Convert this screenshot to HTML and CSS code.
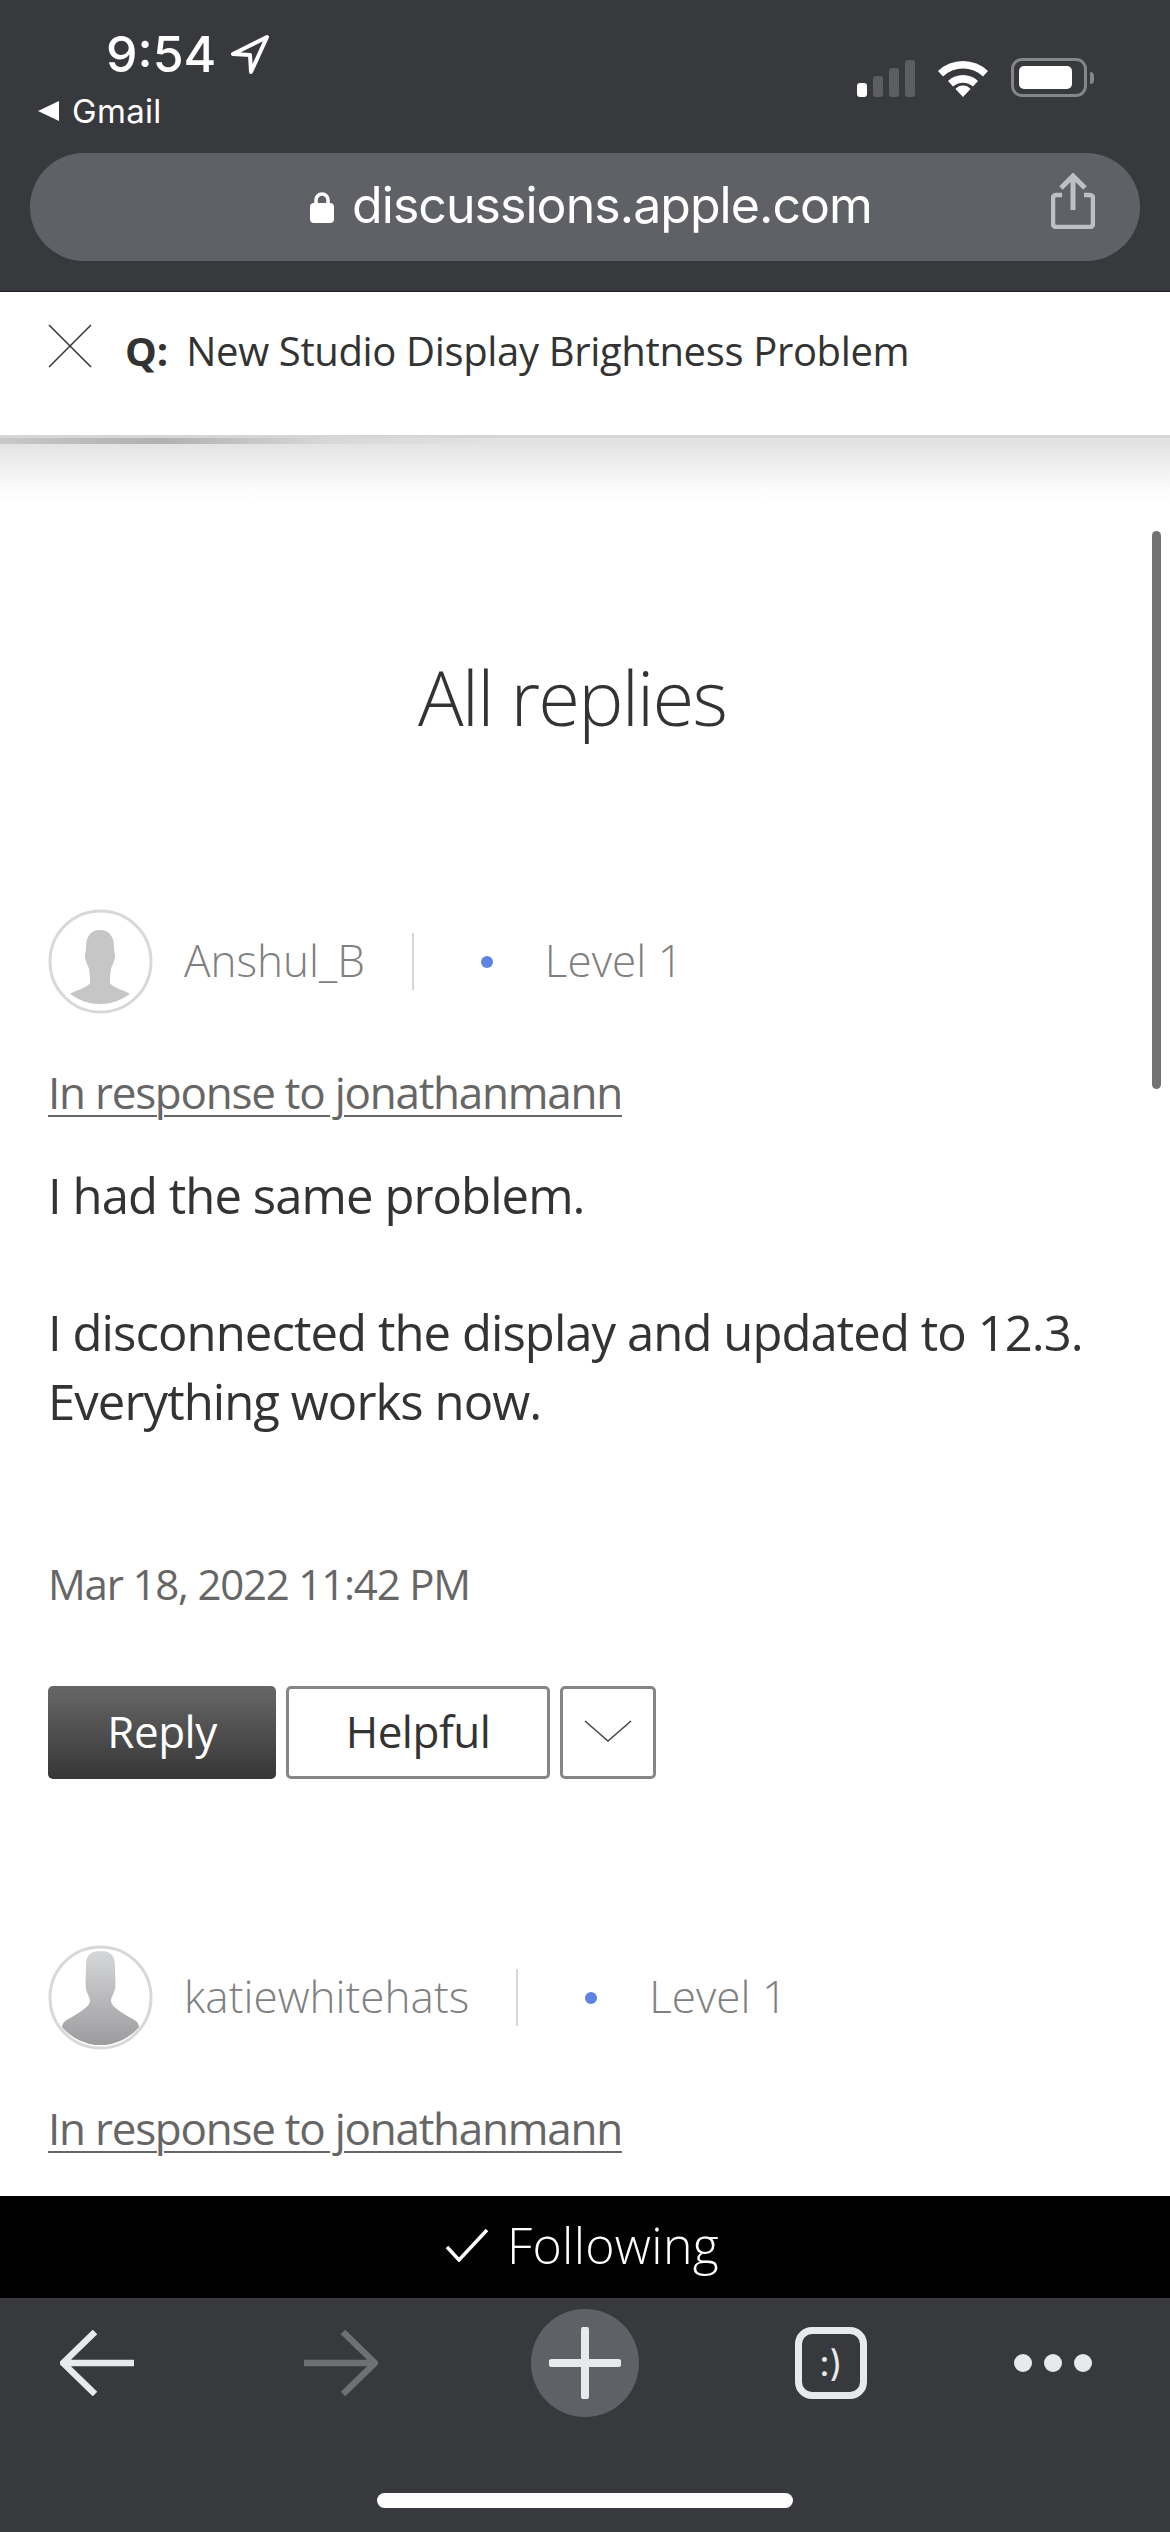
FILE: index.html
```html
<!DOCTYPE html>
<html lang="en">
<head>
    <meta charset="UTF-8">
    <title>New Studio Display Brightness Problem</title>
    <link rel="stylesheet" href="styles.css">
</head>
<body>
    <header class="browser-top">
        <div class="status">
            <div class="status-left">
                <div class="clock">
                    <span>9:54</span>
                    <svg class="location" width="40" height="40" viewBox="0 0 40 40"><path d="M37 3 3 20l17 1 1 17z" fill="none" stroke="#fff" stroke-width="4" stroke-linejoin="round"/></svg>
                </div>
                <div class="back-app"><span class="back-tri"></span>Gmail</div>
            </div>
            <div class="status-right">
                <div class="signal">
                    <span class="bar bar-on bar1"></span>
                    <span class="bar bar2"></span>
                    <span class="bar bar3"></span>
                    <span class="bar bar4"></span>
                </div>
                <svg class="wifi" width="52" height="38" viewBox="0 0 52 38"><path d="M1 12a36 36 0 0 1 50 0l-5 5.500a29 29 0 0 0-40 0z M11 22a22 22 0 0 1 30 0l-5 5.500a15 15 0 0 0-20 0z M18.500 30a10 10 0 0 1 15 0L26 38z" fill="#fff"/></svg>
                <div class="battery"><span class="battery-fill"></span></div>
                <span class="battery-cap"></span>
            </div>
        </div>
        <div class="url-bar">
            <svg class="lock" width="24" height="32" viewBox="0 0 24 32"><path d="M6 14V9a6 6 0 0 1 12 0v5" fill="none" stroke="#fff" stroke-width="3.500"/><rect x="0" y="12" width="24" height="20" rx="4" fill="#fff"/></svg>
            <span class="url">discussions.apple.com</span>
            <svg class="share" width="44" height="56" viewBox="0 0 44 56"><path d="M11 22H5a3 3 0 0 0-3 3v26a3 3 0 0 0 3 3h34a3 3 0 0 0 3-3V25a3 3 0 0 0-3-3h-6" fill="none" stroke="#bcc0c6" stroke-width="4.500"/><path d="M22 37V4M10 15 22 3l12 12" fill="none" stroke="#bcc0c6" stroke-width="5"/></svg>
        </div>
    </header>

    <div class="question-bar">
        <svg class="close" width="44" height="44" viewBox="0 0 44 44"><path d="M1 1l42 42M43 1 1 43" stroke="#333" stroke-width="1.500"/></svg>
        <span class="q-label">Q:</span>
        <span class="q-title">New Studio Display Brightness Problem</span>
    </div>
    <div class="question-rule"></div>

    <main class="content">
        <span class="scroll-thumb"></span>
        <h1 class="page-title">All replies</h1>

        <article class="reply">
            <div class="author">
                <svg class="avatar" width="105" height="105" viewBox="0 0 105 105">
                    <circle cx="52.500" cy="52.500" r="50.500" fill="#fff"/>
                    <path d="M52 21c10 0 14 7 14 18 0 3 1 5 1 8 0 5-3 9-4 13-1 5-1 9-1 14 3 5 14 7 20 11a50 50 0 0 1-60 0c6-4 17-6 20-11 0-5 0-9-1-14-1-4-4-8-4-13 0-3 1-5 1-8 0-11 4-18 14-18z" fill="#c6c6c6"/>
                    <circle cx="52.500" cy="52.500" r="50.500" fill="none" stroke="#d8d8d8" stroke-width="3"/>
                </svg>
                <span class="author-name">Anshul_B</span>
                <span class="author-sep"></span>
                <span class="level-dot"></span>
                <span class="author-level">Level 1</span>
            </div>
            <a class="in-response">In response to jonathanmann</a>
            <div class="reply-body">
                <p>I had the same problem.</p>
                <p>I disconnected the display and updated to 12.3. Everything works now.</p>
            </div>
            <div class="reply-date">Mar 18, 2022 11:42 PM</div>
            <div class="actions">
                <button class="btn btn-reply">Reply</button>
                <button class="btn btn-helpful">Helpful</button>
                <button class="btn btn-more">
                    <svg width="48" height="24" viewBox="0 0 48 24"><path d="M1 2l23 20L47 2" fill="none" stroke="#444" stroke-width="1.500"/></svg>
                </button>
            </div>
        </article>

        <article class="reply">
            <div class="author">
                <svg class="avatar" width="105" height="105" viewBox="0 0 105 105">
                    <defs>
                        <linearGradient id="bust" x1="0" y1="0" x2="0" y2="1">
                            <stop offset="0" stop-color="#d6d7d9"/>
                            <stop offset="1" stop-color="#9c9c9e"/>
                        </linearGradient>
                    </defs>
                    <circle cx="52.500" cy="52.500" r="50.500" fill="#fff"/>
                    <path d="M52 6c12 0 15 5 15 16 0 8 1 16 0 22-1 5-4 8-4 12 0 5 9 11 25 20 2 2 3 4 3 6a50 50 0 0 1-77 0c0-2 1-4 3-6 16-9 25-15 25-20 0-4-3-7-4-12-1-6 0-14 0-22 0-11 3-16 15-16z" fill="url(#bust)"/>
                    <circle cx="52.500" cy="52.500" r="50.500" fill="none" stroke="#d8d8d8" stroke-width="3"/>
                </svg>
                <span class="author-name">katiewhitehats</span>
                <span class="author-sep"></span>
                <span class="level-dot"></span>
                <span class="author-level">Level 1</span>
            </div>
            <a class="in-response">In response to jonathanmann</a>
        </article>
    </main>

    <div class="follow-bar">
        <svg width="44" height="34" viewBox="0 0 44 34"><path d="M2 19l12 13L42 2" fill="none" stroke="#fff" stroke-width="3.500"/></svg>
        <span>Following</span>
    </div>

    <footer class="browser-bottom">
        <div class="toolbar">
            <svg class="tool" width="74" height="66" viewBox="0 0 74 66"><path d="M74 33H4M35 2 3 33l32 31" fill="none" stroke="#e8e9ed" stroke-width="6.500"/></svg>
            <svg class="tool" width="74" height="66" viewBox="0 0 74 66"><path d="M0 33h70M39 2l32 31-32 31" fill="none" stroke="#6f7073" stroke-width="6.500"/></svg>
            <span class="plus-btn">
                <svg width="72" height="72" viewBox="0 0 72 72"><path d="M36 3v66M3 36h66" stroke="#e8e9ed" stroke-width="8" stroke-linecap="round"/></svg>
            </span>
            <span class="tabs-btn">:)</span>
            <span class="more-btn"><i></i><i></i><i></i></span>
        </div>
        <div class="home-bar"></div>
    </footer>
</body>
</html>
```

FILE: styles.css
```css
* {
    box-sizing: border-box;
}

html, body {
    margin: 0;
    height: 2532px;
}

body {
    display: flex;
    flex-direction: column;
    overflow: hidden;
    background: #fff;
    font-family: "Open Sans", "Noto Sans", sans-serif;
    color: #333;
}

/* top of the browser */
.browser-top {
    height: 292px;
    flex: none;
    background: #38393d;
    padding: 0 30px;
    border-bottom: 1px solid #1d1d1f;
    font-family: Inter, sans-serif;
    color: #fff;
}

.status {
    height: 153px;
    display: flex;
    justify-content: space-between;
}

.status-left {
    padding-top: 26px;
}

.clock {
    display: flex;
    align-items: center;
    gap: 14px;
    padding-left: 76px;
    font-size: 50px;
    line-height: 56px;
    font-weight: 500;
}

.back-app {
    display: flex;
    align-items: center;
    gap: 13px;
    margin-top: 9px;
    padding-left: 8px;
    font-size: 33px;
    line-height: 40px;
    letter-spacing: 0.3px;
}

.back-tri {
    border-right: 21px solid #fff;
    border-top: 10px solid transparent;
    border-bottom: 10px solid transparent;
}

.status-right {
    display: flex;
    align-items: flex-end;
    height: 97px;
    margin-right: 46px;
}

.signal {
    display: flex;
    align-items: flex-end;
    gap: 6px;
    margin-right: 22px;
}

.bar {
    width: 10px;
    border-radius: 3px;
    background: #5c5d60;
}

.bar-on { background: #fff; }
.bar1 { height: 14px; }
.bar2 { height: 21px; }
.bar3 { height: 29px; }
.bar4 { height: 37px; }

.wifi {
    margin-right: 22px;
}

.battery {
    width: 76px;
    height: 39px;
    padding: 5px;
    border: 3px solid #858688;
    border-radius: 11px;
}

.battery-fill {
    display: block;
    width: 53px;
    height: 100%;
    background: #fff;
    border-radius: 5px;
}

.battery-cap {
    width: 4px;
    height: 12px;
    margin: 0 0 13px 3px;
    background: #858688;
    border-radius: 0 6px 6px 0;
}

.url-bar {
    position: relative;
    height: 108px;
    display: flex;
    align-items: center;
    justify-content: center;
    gap: 18px;
    padding: 0 0 5px 12px;
    background: #5f6166;
    border-radius: 54px;
}

.url {
    font-size: 50px;
    letter-spacing: -0.95px;
}

.lock {
    margin-top: 4px;
}

.share {
    position: absolute;
    right: 45px;
    top: 20px;
}

/* question strip */
.question-bar {
    height: 143px;
    flex: none;
    display: flex;
    align-items: flex-start;
    padding: 31px 0 0 48px;
    font-size: 40px;
    line-height: 56px;
    color: #333;
}

.close {
    margin: 1px 33px 0 0;
}

.q-label {
    font-weight: 700;
    margin-right: 18px;
}

.q-title {
    letter-spacing: -0.35px;
}

.question-rule {
    height: 9px;
    flex: none;
    background:
        linear-gradient(#d6d6d6 3px, transparent 3px),
        linear-gradient(90deg, #c8c8c8 0, #b0b0b0 160px, #d8d8d8 330px, #e2e2e2 500px);
}

/* page content */
.content {
    position: relative;
    flex: 1;
    min-height: 0;
    overflow: hidden;
    padding: 0 48px;
    background: linear-gradient(#e3e3e3, #fbfbfb 44px, #fff 60px) no-repeat;
}

.scroll-thumb {
    position: absolute;
    right: 9px;
    top: 87px;
    width: 9px;
    height: 558px;
    border-radius: 5px;
    background: #737373;
}

.page-title {
    margin: 0;
    padding: 203px 26px 0 0;
    height: 465px;
    text-align: center;
    font-size: 76px;
    line-height: 100px;
    font-weight: 300;
    letter-spacing: -1.8px;
    color: #333;
}

.reply {
    margin-bottom: 166px;
}

.author {
    display: flex;
    align-items: center;
    height: 105px;
    font-size: 44px;
    font-weight: 300;
    letter-spacing: 0.05px;
    color: #808080;
}

.avatar {
    flex: none;
    margin-right: 31px;
}

.author-name,
.author-level {
    margin-bottom: 3px;
}

.author-sep {
    width: 2px;
    height: 57px;
    margin: 0 67px 0 47px;
    background: #d6d6d6;
}

.level-dot {
    width: 12px;
    height: 12px;
    margin-right: 52px;
    border-radius: 50%;
    background: #5f83e0;
}

.in-response {
    display: block;
    margin-top: 48px;
    font-size: 44px;
    line-height: 60px;
    letter-spacing: -1.25px;
    color: #666;
    text-decoration: underline;
    text-decoration-thickness: 2px;
    text-underline-offset: 6px;
}

.reply-body {
    margin-top: 39px;
    font-size: 49px;
    line-height: 69px;
    letter-spacing: -0.93px;
    color: #333;
}

.reply-body p {
    margin: 0 0 68px;
}

.reply-date {
    margin-top: 118px;
    font-size: 42px;
    line-height: 60px;
    letter-spacing: -1.2px;
    color: #666;
}

.actions {
    display: flex;
    gap: 10px;
    margin-top: 72px;
}

.btn {
    height: 93px;
    padding: 0 0 3px;
    border-radius: 5px;
    font-family: inherit;
    font-size: 44px;
    letter-spacing: -0.5px;
}

.btn-reply {
    width: 228px;
    border: 0;
    background: linear-gradient(#676767, #363636);
    color: #fff;
}

.btn-helpful {
    width: 264px;
    border: 3px solid #868686;
    background: #fff;
    color: #333;
}

.btn-more {
    width: 96px;
    display: flex;
    align-items: center;
    justify-content: center;
    border: 3px solid #868686;
    background: #fff;
}

/* bottom of the browser */
.follow-bar {
    height: 102px;
    flex: none;
    display: flex;
    align-items: center;
    justify-content: center;
    gap: 18px;
    padding: 0 6px 5px 0;
    background: #000;
    color: #fff;
    font-size: 50px;
    font-weight: 300;
    letter-spacing: 0.3px;
}

.browser-bottom {
    height: 234px;
    flex: none;
    background: #38393d;
}

.toolbar {
    display: grid;
    grid-template-columns: 194px 294px 194px 298px 146px;
    justify-items: center;
    align-items: center;
    height: 195px;
    padding: 0 0 66px;
}

.plus-btn {
    width: 108px;
    height: 108px;
    display: flex;
    align-items: center;
    justify-content: center;
    border-radius: 50%;
    background: #5f6166;
}

.tabs-btn {
    width: 72px;
    height: 72px;
    display: flex;
    align-items: center;
    justify-content: center;
    border: 7px solid #e8e9ed;
    border-radius: 17px;
    font-family: Inter, sans-serif;
    font-size: 36px;
    color: #e8e9ed;
}

.more-btn {
    display: flex;
    gap: 12px;
}

.more-btn i {
    width: 18px;
    height: 18px;
    border-radius: 50%;
    background: #e8e9ed;
}

.home-bar {
    width: 416px;
    height: 15px;
    margin: 0 auto;
    border-radius: 8px;
    background: #fcfcfc;
}
```
